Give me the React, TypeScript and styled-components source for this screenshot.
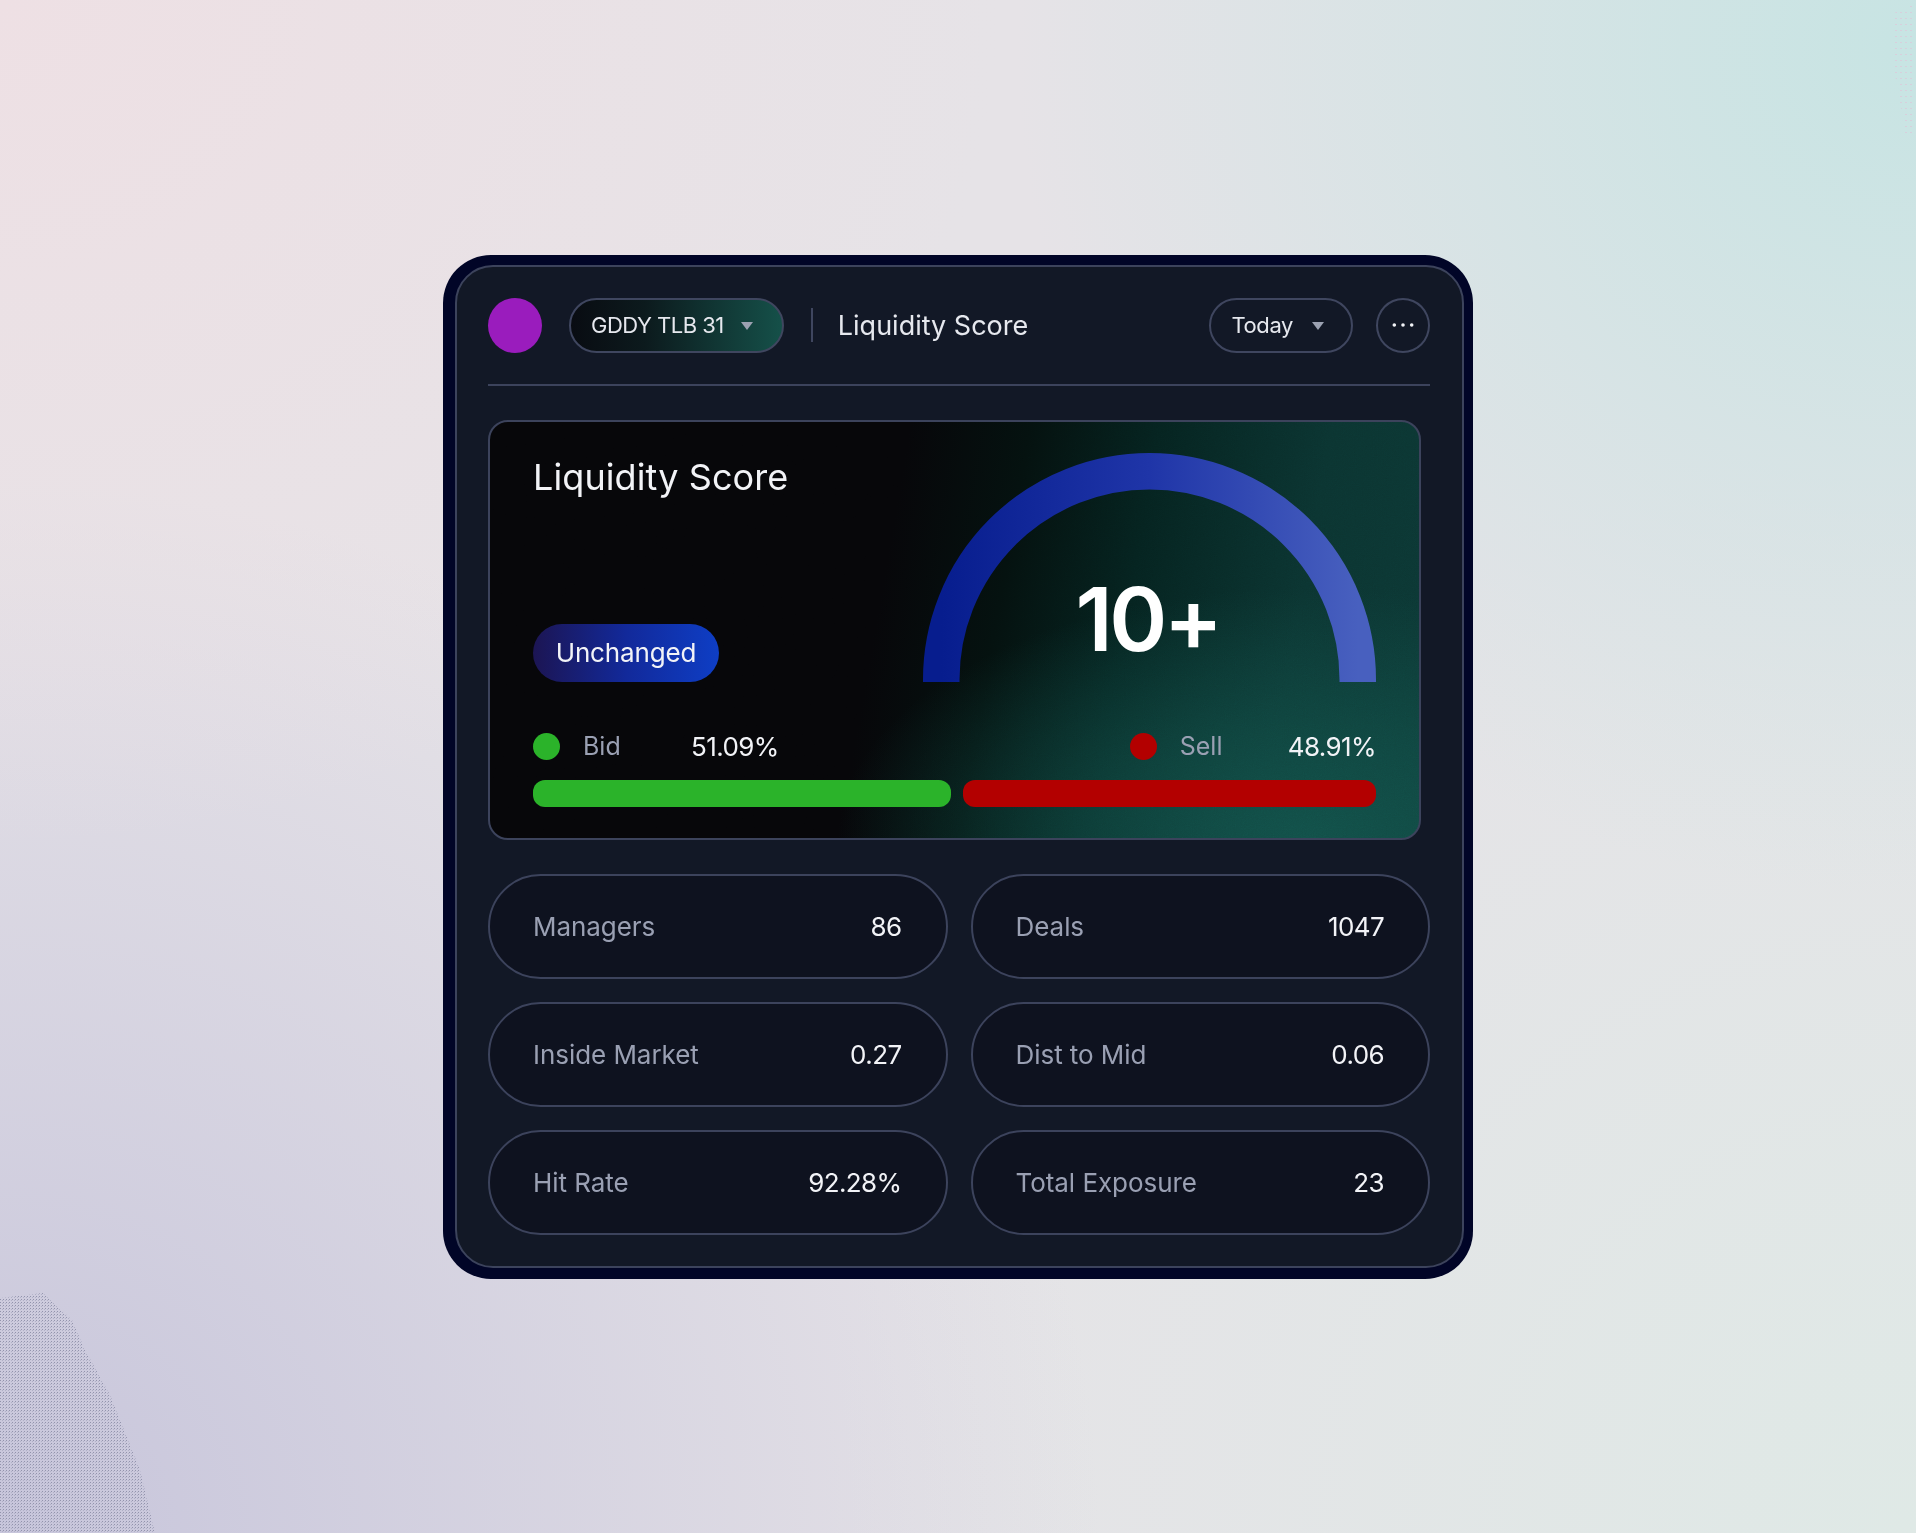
import React, {FC} from 'react';
import styled, {createGlobalStyle} from 'styled-components';

const GlobalStyle = createGlobalStyle`
  html, body {
    margin: 0;
    padding: 0;
  }

  body {
    font-family: Inter, "Liberation Sans", sans-serif;
  }
`

const Page = styled.div`
  position: relative;
  width: 1916px;
  height: 1533px;
  overflow: hidden;
  display: flex;
  justify-content: center;
  align-items: center;
  background:
    radial-gradient(ellipse 900px 850px at 100% 3%, #c7e4e3 0%, rgba(199, 228, 227, 0) 100%),
    radial-gradient(ellipse 1000px 850px at 0% 0%, #eee0e4 0%, rgba(238, 224, 228, 0) 100%),
    radial-gradient(ellipse 1100px 1050px at 0% 100%, #c7c5db 0%, rgba(199, 197, 219, 0) 100%),
    radial-gradient(ellipse 1100px 1100px at 100% 100%, #dfe9e6 0%, rgba(223, 233, 230, 0) 100%),
    #e6e3e7;
`

const Speckle = styled.svg`
  position: absolute;
  left: 0;
  top: 0;
  pointer-events: none;
`

const Frame = styled.div`
  width: 1030px;
  height: 1024px;
  box-sizing: border-box;
  padding: 10px 9px 11px 12px;
  border-radius: 48px;
  background: #010527;
`

const Panel = styled.div`
  height: 100%;
  box-sizing: border-box;
  padding: 31px 32px 0 31px;
  border: 2px solid #3c435c;
  border-radius: 38px;
  background: #121826;
  display: flex;
  flex-direction: column;
`

const Header = styled.header`
  display: flex;
  align-items: center;
  height: 55px;
  padding-bottom: 31px;
  border-bottom: 2px solid #3c435c;
`

const Avatar = styled.div`
  width: 54px;
  height: 55px;
  border-radius: 50%;
  background: #9a1cbd;
`

const Pill = styled.button`
  height: 55px;
  box-sizing: border-box;
  padding: 0 27px 0 20px;
  display: flex;
  align-items: center;
  gap: 19px;
  border: 2px solid #3f465f;
  border-radius: 28px;
  background: transparent;
  color: #e6e8ee;
  font-family: inherit;
  font-size: 22px;
  letter-spacing: -0.4px;
`

const TickerPill = styled(Pill)`
  margin-left: 27px;
  padding-right: 29px;
  gap: 17px;
  letter-spacing: -0.5px;
  background: linear-gradient(90deg, #090c12 0%, #0c1a1d 35%, #155049 100%);
`

const Caret = styled.span`
  width: 0;
  height: 0;
  border-left: 6.5px solid transparent;
  border-right: 6.5px solid transparent;
  border-top: 8px solid #9ba1b1;
  margin-top: 2px;
`

const Separator = styled.div`
  width: 2px;
  height: 34px;
  margin: 0 25px 0 27px;
  background: #3f465f;
`

const HeaderTitle = styled.h2`
  margin: 0;
  flex: 1;
  font-size: 27px;
  font-weight: 400;
  color: #e6e8ee;
`

const IconButton = styled.button`
  width: 54px;
  height: 55px;
  margin-left: 23px;
  padding: 0;
  display: flex;
  align-items: center;
  justify-content: center;
  border: 2px solid #3f465f;
  border-radius: 50%;
  background: transparent;
`

const ScoreCard = styled.section`
  position: relative;
  width: 933px;
  height: 420px;
  box-sizing: border-box;
  margin-top: 34px;
  padding: 31px 43px 0;
  border: 2px solid #3c435c;
  border-radius: 20px;
  overflow: hidden;
  background:
    radial-gradient(ellipse 470px 250px at 88% 100%, #125049 0%, rgba(18, 80, 73, 0.6) 45%, rgba(18, 80, 73, 0) 100%),
    linear-gradient(100deg, #060609 42%, #04110f 54%, #052320 67%, #0b3431 84%, #0c3835 100%);
`

const Grain = styled.svg`
  position: absolute;
  inset: 0;
  opacity: 0.14;
  mix-blend-mode: overlay;
  pointer-events: none;
`

const ScoreTop = styled.div`
  position: relative;
  display: flex;
  justify-content: space-between;
  height: 234px;
`

const ScoreLeft = styled.div`
  height: 229px;
  display: flex;
  flex-direction: column;
  justify-content: space-between;
  align-items: flex-start;
`

const ScoreTitle = styled.h1`
  margin: 0;
  font-size: 36px;
  line-height: 48px;
  font-weight: 400;
  letter-spacing: 0.1px;
  color: #f2f3f7;
`

const Badge = styled.div`
  height: 58px;
  width: 186px;
  display: flex;
  align-items: center;
  justify-content: center;
  border-radius: 29px;
  background: linear-gradient(90deg, #1c1553 0%, #12299a 50%, #0e3ec5 100%);
  color: #f2f3f7;
  font-size: 26px;
  letter-spacing: -0.15px;
`

const Gauge = styled.div`
  position: relative;
  width: 453px;
  height: 229px;
  display: flex;
  justify-content: center;
`

const GaugeValue = styled.div`
  position: absolute;
  left: 0;
  right: 4px;
  top: 113px;
  text-align: center;
  font-size: 88px;
  line-height: 106px;
  font-weight: 600;
  letter-spacing: -3.5px;
  color: #fff;
`

const Legend = styled.div`
  position: relative;
  display: flex;
  justify-content: space-between;
  height: 27px;
  margin-top: 44px;
`

const LegendGroup = styled.div`
  display: grid;
  grid-template-columns: 27px 131px auto;
  align-items: center;
  font-size: 25px;
`

const Dot = styled.span<{$color: string}>`
  width: 27px;
  height: 27px;
  border-radius: 50%;
  background: ${p => p.$color};
`

const LegendLabel = styled.span`
  padding-left: 23px;
  color: #9aa0b3;
`

const LegendValue = styled.span`
  color: #f2f3f7;
  font-size: 26px;
  letter-spacing: -0.6px;
`

const Bars = styled.div`
  position: relative;
  display: flex;
  gap: 12px;
  margin-top: 22px;
`

const Bar = styled.div<{$color: string, $size: number}>`
  flex: ${p => p.$size};
  height: 27px;
  border-radius: 12px;
  background: ${p => p.$color};
`

const Stats = styled.div`
  display: grid;
  grid-template-columns: 1fr 1fr;
  gap: 23px;
  margin-top: 34px;
`

const Stat = styled.div`
  height: 105px;
  box-sizing: border-box;
  padding: 0 44px 0 43px;
  display: flex;
  align-items: center;
  justify-content: space-between;
  border: 2px solid #3c435c;
  border-radius: 53px;
  background: #0e121f;
  font-size: 26px;
`

const StatLabel = styled.span`
  color: #9aa0b3;
  letter-spacing: -0.05px;
`

const StatValue = styled.span`
  color: #f2f3f7;
  letter-spacing: -0.6px;
`

const stats = [
    {label: 'Managers', value: '86'},
    {label: 'Deals', value: '1047'},
    {label: 'Inside Market', value: '0.27'},
    {label: 'Dist to Mid', value: '0.06'},
    {label: 'Hit Rate', value: '92.28%'},
    {label: 'Total Exposure', value: '23'},
]

const App: FC = () => {
    return (
        <Page>
            <GlobalStyle/>
            <Speckle width="1916" height="1533">
                <defs>
                    <pattern id="dotsDark" width="3" height="3" patternUnits="userSpaceOnUse">
                        <rect x="0" y="0" width="1" height="1" fill="#9293ac"/>
                        <rect x="2" y="1" width="1" height="1" fill="#b0b0c6"/>
                    </pattern>
                    <pattern id="dotsPink" width="5" height="6" patternUnits="userSpaceOnUse">
                        <rect x="0" y="0" width="2" height="1" fill="#d8cfdc"/>
                    </pattern>
                </defs>
                <polygon points="0,1298 43,1293 72,1320 85,1350 110,1395 140,1470 155,1533 0,1533" fill="url(#dotsDark)"/>
                <polygon points="1892,14 1912,5 1914,70 1912,138 1906,138 1898,90 1892,60" fill="url(#dotsPink)"/>
            </Speckle>
            <Frame>
                <Panel>
                    <Header>
                        <Avatar/>
                        <TickerPill>GDDY TLB 31<Caret/></TickerPill>
                        <Separator/>
                        <HeaderTitle>Liquidity Score</HeaderTitle>
                        <Pill>Today<Caret/></Pill>
                        <IconButton aria-label="More">
                            <svg width="22" height="6" viewBox="0 0 22 6">
                                <circle cx="2.3" cy="3" r="1.8" fill="#f2f3f7"/>
                                <circle cx="11" cy="3" r="1.8" fill="#f2f3f7"/>
                                <circle cx="19.7" cy="3" r="1.8" fill="#f2f3f7"/>
                            </svg>
                        </IconButton>
                    </Header>

                    <ScoreCard>
                        <Grain width="100%" height="100%">
                            <filter id="grain">
                                <feTurbulence type="fractalNoise" baseFrequency="0.9" numOctaves="2"/>
                                <feColorMatrix type="saturate" values="0"/>
                            </filter>
                            <rect width="100%" height="100%" filter="url(#grain)"/>
                        </Grain>
                        <ScoreTop>
                            <ScoreLeft>
                                <ScoreTitle>Liquidity Score</ScoreTitle>
                                <Badge>Unchanged</Badge>
                            </ScoreLeft>
                            <Gauge>
                                <svg width="453" height="229" viewBox="0 0 453 229">
                                    <defs>
                                        <linearGradient id="arc" x1="0" y1="0" x2="1" y2="0">
                                            <stop offset="0" stopColor="#071d8e"/>
                                            <stop offset="0.5" stopColor="#1f35a8"/>
                                            <stop offset="1" stopColor="#4860bf"/>
                                        </linearGradient>
                                    </defs>
                                    <path d="M18.25 229 V226.5 A208.25 208.25 0 0 1 434.75 226.5 V229" fill="none" stroke="url(#arc)" strokeWidth="36.5"/>
                                </svg>
                                <GaugeValue>10+</GaugeValue>
                            </Gauge>
                        </ScoreTop>
                        <Legend>
                            <LegendGroup>
                                <Dot $color="#2bb32a"/>
                                <LegendLabel>Bid</LegendLabel>
                                <LegendValue>51.09%</LegendValue>
                            </LegendGroup>
                            <LegendGroup>
                                <Dot $color="#b30000"/>
                                <LegendLabel>Sell</LegendLabel>
                                <LegendValue>48.91%</LegendValue>
                            </LegendGroup>
                        </Legend>
                        <Bars>
                            <Bar $color="#2bb32a" $size={418}/>
                            <Bar $color="#b30000" $size={413}/>
                        </Bars>
                    </ScoreCard>

                    <Stats>
                        {stats.map(s => (
                            <Stat key={s.label}>
                                <StatLabel>{s.label}</StatLabel>
                                <StatValue>{s.value}</StatValue>
                            </Stat>
                        ))}
                    </Stats>
                </Panel>
            </Frame>
        </Page>
    );
};

export default App;
